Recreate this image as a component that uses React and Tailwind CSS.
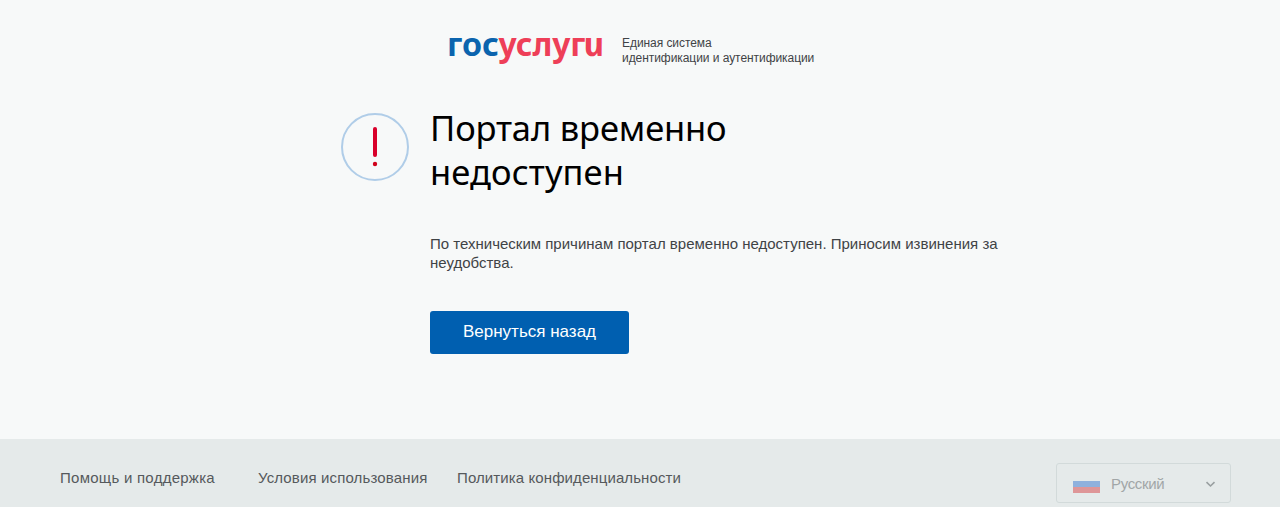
import React from 'react';

const footerLinks = [
  { label: 'Помощь и поддержка', className: 'w-[198px] tracking-[0.26px]' },
  { label: 'Условия использования', className: 'w-[199px] tracking-[0.14px]' },
  { label: 'Политика конфиденциальности', className: 'tracking-[0.1px]' },
];

const Logo = () => (
  <svg width="160" height="52" viewBox="0 0 160 52" className="shrink-0">
    <g fontFamily="'Noto Sans', sans-serif" fontWeight="700" fontSize="33">
      <text x="-1" y="38" fill="#0b64ae" textLength="52" lengthAdjust="spacingAndGlyphs">гос</text>
      <text x="50.5" y="38" fill="#ee3f58" textLength="87" lengthAdjust="spacingAndGlyphs">услуг</text>
      {/* the italic form of the last letter, set upright */}
      <text
        transform="translate(137.5 38) skewX(12)"
        fill="#ee3f58"
        fontStyle="italic"
        textLength="20.5"
        lengthAdjust="spacingAndGlyphs"
      >
        и
      </text>
    </g>
  </svg>
);

const AlertIcon = () => (
  <svg width="68" height="68" viewBox="0 0 68 68" fill="none" className="shrink-0">
    <circle cx="34" cy="34" r="33" stroke="#b0cde8" strokeWidth="2" />
    <path d="M34 16V42" stroke="#d9002b" strokeWidth="4" strokeLinecap="round" />
    <circle cx="34" cy="51" r="2.2" fill="#d0021b" />
  </svg>
);

const LanguageSelect = () => (
  <button className="flex h-10 w-[175px] items-center rounded-[3px] border border-[#d2dada] pl-4 pr-[14px]">
    <div className="mt-[7px] flex w-[27px] flex-col">
      <div className="h-1.5 bg-[#8fb1dd]" />
      <div className="h-1.5 bg-[#de9698]" />
    </div>
    <span className="ml-[11px] mt-0.5 text-[15px] tracking-[-0.35px] text-[#a1a6a7]">Русский</span>
    <svg width="11" height="7" viewBox="0 0 11 7" fill="none" className="ml-auto mt-[3px]">
      <path d="M1.5 1.2L5.5 5L9.5 1.2" stroke="#999fa0" strokeWidth="1.6" />
    </svg>
  </button>
);

export default function App() {
  return (
    <div className="flex h-[507px] w-[1280px] flex-col overflow-hidden bg-[#f7f9f9] font-['Liberation_Sans',Arial,sans-serif]">
      <header className="flex h-[70px] pl-[448px] pt-[18px]">
        <Logo />
        <p className="ml-[14px] mt-[18px] whitespace-nowrap text-[12px] leading-[15px] tracking-[-0.06px] text-[#3f4346]">
          Единая система
          <br />
          идентификации и аутентификации
        </p>
      </header>

      <main className="flex flex-1 pl-[341px] pt-[36px]">
        <div className="pt-[7px]">
          <AlertIcon />
        </div>
        <div className="ml-[21px]">
          <h1 className="whitespace-nowrap font-['Noto_Sans',sans-serif] text-[34.5px] leading-[44px] tracking-[-0.15px] text-black">
            Портал временно
            <br />
            <span className="tracking-[0.1px]">недоступен</span>
          </h1>
          <p className="mt-[40px] whitespace-nowrap text-[15px] leading-[19px] text-[#3f4346]">
            По техническим причинам портал временно недоступен. Приносим извинения за
            <br />
            неудобства.
          </p>
          <button className="mt-[39px] h-[43px] w-[199px] rounded-[3px] bg-[#005fb0] pb-0.5 text-[17px] text-white">
            Вернуться назад
          </button>
        </div>
      </main>

      <footer className="flex h-[68px] shrink-0 items-start justify-between bg-[#e5eaea] pl-[60px] pr-[49px] pt-6">
        <nav className="flex pt-[5px] text-[15px] leading-[20px] text-[#55595c]">
          {footerLinks.map((link) => (
            <a key={link.label} href="#" className={`whitespace-nowrap ${link.className}`}>
              {link.label}
            </a>
          ))}
        </nav>
        <LanguageSelect />
      </footer>
    </div>
  );
}
